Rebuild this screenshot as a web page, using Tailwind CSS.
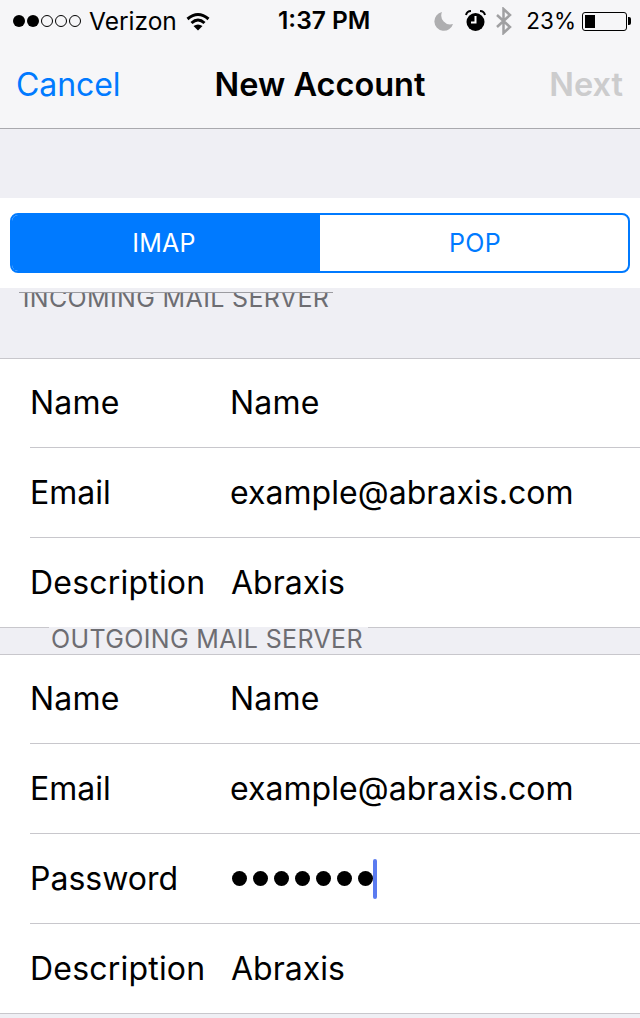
<!DOCTYPE html>
<html lang="en">
<head>
    <meta charset="UTF-8">
    <meta name="viewport" content="width=device-width, initial-scale=1.0">
    <title>New Account</title>
    <script src="https://cdn.jsdelivr.net/npm/@tailwindcss/browser@4"></script>
</head>
<body class="h-[1018px] overflow-hidden bg-[#efeff4] font-['Inter',sans-serif] text-black">
    <!-- status bar + nav -->
    <header class="h-[129px] bg-[#f6f6f8] border-b border-[#a9a9ae]">
        <div class="relative h-[42px] flex items-center pl-[13px] pr-[9px] text-[22px] leading-none">
            <div class="flex items-center gap-[2px]">
                <span class="w-[12px] h-[12px] rounded-full bg-black"></span>
                <span class="w-[12px] h-[12px] rounded-full bg-black"></span>
                <span class="w-[12px] h-[12px] rounded-full border border-black"></span>
                <span class="w-[12px] h-[12px] rounded-full border border-black"></span>
                <span class="w-[12px] h-[12px] rounded-full border border-black"></span>
            </div>
            <span class="ml-[8px] text-[24.5px]">Verizon</span>
            <svg class="ml-[9px]" width="24" height="19" viewBox="0 0 24 19" fill="none" stroke="black" stroke-width="3">
                <path d="M1.500 7 Q12 -2 22.500 7"/>
                <path d="M5.500 11 Q12 5 18.500 11"/>
                <path d="M12 18.500 L7.500 14 Q12 11 16.500 14 Z" fill="black" stroke="none"/>
            </svg>
            <span class="absolute left-[278px] top-[8px] font-semibold text-[24.5px]">1:37 PM</span>
            <div class="ml-auto flex items-center">
                <svg width="20" height="20" viewBox="0 0 20 20"><path d="M8 1 A9.500 9.500 0 1 0 19 13 A9 9 0 0 1 8 1 Z" fill="#aeaeb0"/></svg>
                <svg class="ml-[11px]" width="21" height="22" viewBox="0 0 21 22">
                    <circle cx="10.500" cy="12" r="9" fill="black"/>
                    <path d="M10.500 6 V12.500 H6" stroke="white" stroke-width="2" fill="none"/>
                    <path d="M1 5 Q2 1 6 1 M20 5 Q19 1 15 1" stroke="black" stroke-width="2" fill="none"/>
                </svg>
                <svg class="ml-[9px]" width="17" height="28" viewBox="0 0 17 28" fill="none" stroke="#a0a0a2" stroke-width="2.500">
                    <path d="M2 8 L15 20 L8.500 26 V2 L15 8 L2 20"/>
                </svg>
                <span class="ml-[14px] text-[22.500px]">23%</span>
                <div class="ml-[6px] flex items-center">
                    <div class="w-[45px] h-[19px] border border-black rounded-[3px] p-[2px]">
                        <div class="w-[10px] h-full bg-black"></div>
                    </div>
                    <div class="ml-[1px] w-[3px] h-[8px] bg-black rounded-r-[2px]"></div>
                </div>
            </div>
        </div>
        <div class="relative h-[86px] flex items-center justify-between pl-[16px] pr-[17px] pb-[1px] text-[32px]">
            <span class="text-[#007aff] tracking-[-0.1px]">Cancel</span>
            <span class="absolute left-0 right-0 mt-[2px] text-center font-semibold text-[32.500px]">New Account</span>
            <span class="mt-[2px] font-semibold text-[#cccccd] text-[32.500px]">Next</span>
        </div>
    </header>

    <div class="h-[69px]"></div>

    <!-- IMAP / POP switch -->
    <div class="h-[90px] bg-white flex items-center px-[10px]">
        <div class="w-full h-[60px] flex rounded-[8px] border-2 border-[#007aff] overflow-hidden text-[25px] tracking-[0.3px]">
            <div class="w-[308px] bg-[#007aff] text-white flex items-center justify-center pr-[4px] pt-[1px]">IMAP</div>
            <div class="flex-1 text-[#007aff] flex items-center justify-center pl-[2px] pt-[1px]">POP</div>
        </div>
    </div>

    <!-- incoming -->
    <div class="h-[71px] pt-[4px] border-b border-[#c8c7cc]">
        <div class="ml-[19px] w-[314px] h-[18px] overflow-hidden border-t border-[#9b9ba0] text-[25px] tracking-[0.35px] leading-none text-[#6d6d72] text-center whitespace-nowrap">
            <div class="-mt-[8px] pt-[1px]">INCOMING MAIL SERVER</div>
        </div>
    </div>

    <div class="bg-white pl-[30px] text-[32px]">
        <div class="h-[89px] flex items-center border-b border-[#c8c7cc]"><span class="w-[200px] tracking-[0.2px]">Name</span><span class="tracking-[0.2px]">Name</span></div>
        <div class="h-[90px] flex items-center border-b border-[#c8c7cc]"><span class="w-[200px]">Email</span><span class="tracking-[0.05px]">example@abraxis.com</span></div>
        <div class="h-[89px] flex items-center"><span class="w-[201px] tracking-[0.2px]">Description</span><span>Abraxis</span></div>
    </div>

    <!-- outgoing -->
    <div class="relative h-[28px] border-y border-[#c8c7cc]">
        <div class="absolute left-[49px] -top-[1px] w-[319px] h-[27px] bg-[#efeff4] text-[25px] tracking-[0.35px] leading-[25px] text-[#6d6d72] pl-[2px] whitespace-nowrap">OUTGOING MAIL SERVER</div>
    </div>

    <div class="bg-white pl-[30px] text-[32px] border-b border-[#c8c7cc]">
        <div class="h-[89px] flex items-center border-b border-[#c8c7cc]"><span class="w-[200px] tracking-[0.2px]">Name</span><span class="tracking-[0.2px]">Name</span></div>
        <div class="h-[90px] flex items-center border-b border-[#c8c7cc]"><span class="w-[200px]">Email</span><span class="tracking-[0.05px]">example@abraxis.com</span></div>
        <div class="h-[90px] flex items-center border-b border-[#c8c7cc]">
            <span class="w-[201px]">Password</span>
            <div class="flex items-center gap-[6px] ml-[1px]">
                <span class="w-[15px] h-[15px] rounded-full bg-black"></span>
                <span class="w-[15px] h-[15px] rounded-full bg-black"></span>
                <span class="w-[15px] h-[15px] rounded-full bg-black"></span>
                <span class="w-[15px] h-[15px] rounded-full bg-black"></span>
                <span class="w-[15px] h-[15px] rounded-full bg-black"></span>
                <span class="w-[15px] h-[15px] rounded-full bg-black"></span>
                <span class="w-[15px] h-[15px] rounded-full bg-black"></span>
            </div>
            <span class="w-[4px] h-[40px] rounded-[2px] bg-[#5b7bf0]"></span>
        </div>
        <div class="h-[89px] flex items-center"><span class="w-[201px] tracking-[0.2px]">Description</span><span>Abraxis</span></div>
    </div>
</body>
</html>
